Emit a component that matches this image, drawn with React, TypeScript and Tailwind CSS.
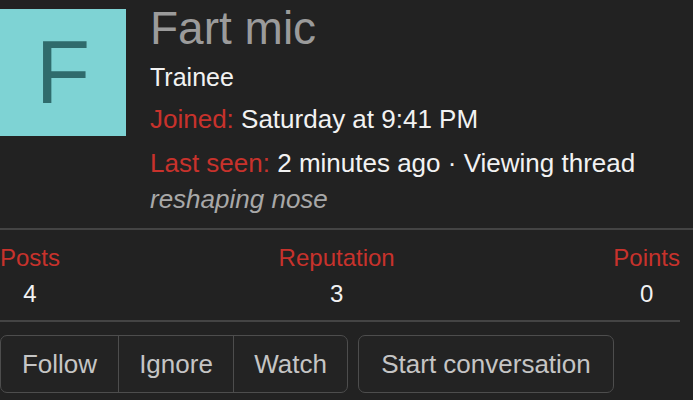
import React from 'react'

const stats = [
  { label: 'Posts', value: '4' },
  { label: 'Reputation', value: '3' },
  { label: 'Points', value: '0' },
]

export default function App() {
  return (
    <div
      className="w-[693px] h-[400px] overflow-hidden bg-[#222222]"
      style={{ fontFamily: '"Liberation Sans", Arial, sans-serif' }}
    >
      {/* Header */}
      <div className="flex mb-[14px]">
        <div className="mt-[9px] w-[126px] h-[127px] shrink-0 bg-[#7ed3d4] flex items-center justify-center">
          <span className="text-[89px] leading-none text-[#2f6b6c]">F</span>
        </div>
        <div className="ml-[24px] pt-[4px] flex flex-col">
          <div className="text-[46px] leading-[48px] text-[#9b9b9b]">Fart mic</div>
          <div className="mt-[7px] text-[25px] leading-[36px] text-[#f2f2f2]">Trainee</div>
          <div className="mt-[5px] text-[26px] leading-[38px] text-[#f2f2f2] whitespace-nowrap">
            <span className="text-[#c8322c]">Joined:</span> Saturday at 9:41 PM
          </div>
          <div className="mt-[6px] text-[26px] leading-[38px] text-[#f2f2f2] whitespace-nowrap">
            <span className="text-[#c8322c]">Last seen:</span> 2 minutes ago · Viewing thread
          </div>
          <div className="mt-[2px] text-[26px] leading-[30px] italic text-[#a8a8a8]">reshaping nose</div>
        </div>
      </div>

      <div className="h-[2px] bg-[#444444]" />

      {/* Stats */}
      <div className="w-[680px] mt-[14px] flex justify-between">
        {stats.map((s) => (
          <div key={s.label} className="flex flex-col items-center">
            <div className="text-[24px] leading-[28px] text-[#c8322c]">{s.label}</div>
            <div className="mt-[8px] text-[24px] leading-[28px] text-[#f2f2f2]">{s.value}</div>
          </div>
        ))}
      </div>

      <div className="w-[680px] h-[2px] mt-[12px] bg-[#444444]" />

      {/* Actions */}
      <div className="mt-[13px] flex gap-[10px] text-[26px] text-[#c5c5c5]">
        <div className="flex h-[58px] rounded-[7px] border border-[#4d4d4d] bg-[#232323]">
          <div className="w-[117px] flex items-center justify-center">Follow</div>
          <div className="w-[115px] flex items-center justify-center border-l border-[#4d4d4d]">Ignore</div>
          <div className="w-[114px] flex items-center justify-center border-l border-[#4d4d4d]">Watch</div>
        </div>
        <div className="h-[58px] w-[256px] rounded-[7px] border border-[#4d4d4d] bg-[#232323] flex items-center justify-center">
          Start conversation
        </div>
      </div>
    </div>
  )
}
